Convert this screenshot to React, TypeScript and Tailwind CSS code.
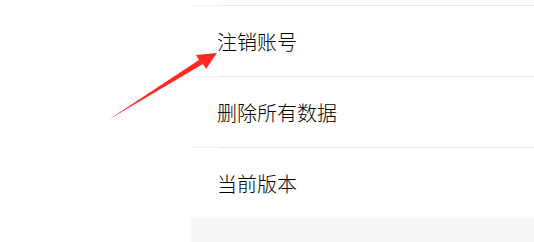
import React from "react";

const Divider = () => (
  <div className="flex h-px w-full">
    <div className="w-[29px] bg-[#f3f3f3]" />
    <div className="flex-1 bg-[#e6e6e6]" />
  </div>
);

const Row = ({ label }: { label: string }) => (
  <div className="flex h-[70px] items-center pl-[26px] pt-[2px] text-[20px] font-light text-black">
    {label}
  </div>
);

export default function App() {
  return (
    <div
      className="relative flex h-[242px] w-[534px] overflow-hidden bg-white"
      style={{ fontFamily: '"Noto Sans CJK SC", "Noto Sans", sans-serif' }}
    >
      <div className="w-[191px] shrink-0" />
      <div className="flex flex-1 flex-col">
        <div className="h-[5px]" />
        <Divider />
        <Row label="注销账号" />
        <Divider />
        <Row label="删除所有数据" />
        <Divider />
        <Row label="当前版本" />
        <div className="flex-1 bg-[#f8f8f8]" />
      </div>
      <svg
        className="absolute left-0 top-0"
        width="534"
        height="242"
        viewBox="0 0 534 242"
      >
        <polygon
          points="108,120 199,60 196,55 217,53 206,69 203,64"
          fill="#ff2a1f"
        />
      </svg>
    </div>
  );
}
